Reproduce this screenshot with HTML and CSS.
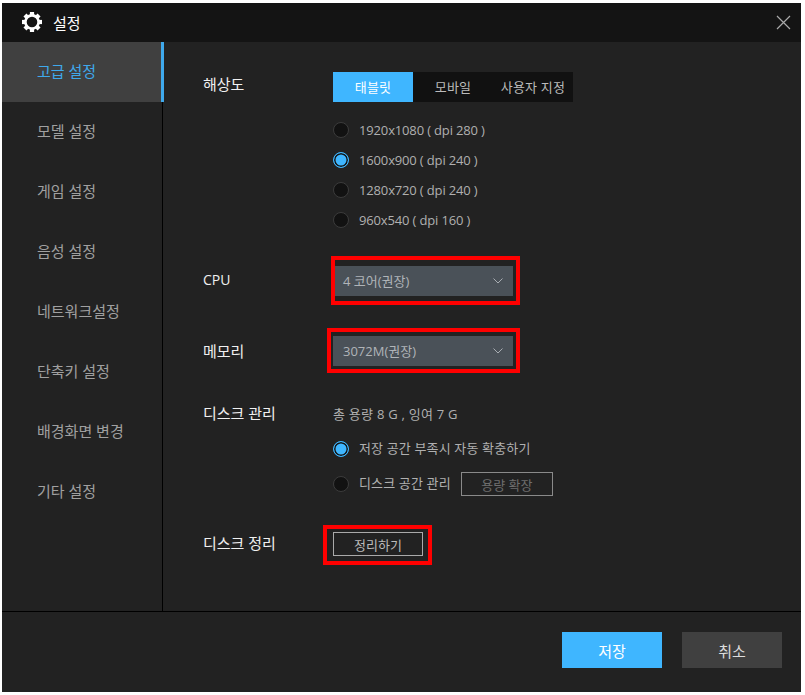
FILE: index.html
```html
<!DOCTYPE html>
<html lang="ko">
<head>
<meta charset="utf-8">
<title>설정</title>
<link rel="stylesheet" href="styles.css">
</head>
<body>
<div class="window">
  <header class="titlebar">
    <svg class="gear" viewBox="0 0 20 20" width="20" height="20">
      <g fill="#fff">
        <rect x="7.9" y="0" width="4.2" height="20"/>
        <rect x="7.9" y="0" width="4.2" height="20" transform="rotate(45 10 10)"/>
        <rect x="7.9" y="0" width="4.2" height="20" transform="rotate(90 10 10)"/>
        <rect x="7.9" y="0" width="4.2" height="20" transform="rotate(135 10 10)"/>
      </g>
      <circle cx="10" cy="10" r="6.6" fill="#141414" stroke="#fff" stroke-width="2.6"/>
    </svg>
    <span class="title">설정</span>
    <svg class="close" viewBox="0 0 15 15" width="15" height="15">
      <path d="M1 1 L14 14 M14 1 L1 14" stroke="#aaa" stroke-width="1.2" fill="none"/>
    </svg>
  </header>

  <div class="main">
    <nav class="sidebar">
      <div class="nav-item active">고급 설정</div>
      <div class="nav-item">모델 설정</div>
      <div class="nav-item">게임 설정</div>
      <div class="nav-item">음성 설정</div>
      <div class="nav-item">네트워크설정</div>
      <div class="nav-item">단축키 설정</div>
      <div class="nav-item">배경화면 변경</div>
      <div class="nav-item">기타 설정</div>
    </nav>

    <section class="content">
      <div class="row">
        <div class="label label-res">해상도</div>
        <div>
          <div class="tabs">
            <div class="tab selected">태블릿</div>
            <div class="tab">모바일</div>
            <div class="tab">사용자 지정</div>
          </div>
          <div class="radios">
            <div class="radio-row latin"><span class="radio"></span>1920x1080 ( dpi 280 )</div>
            <div class="radio-row latin"><span class="radio on"></span>1600x900 ( dpi 240 )</div>
            <div class="radio-row latin"><span class="radio"></span>1280x720 ( dpi 240 )</div>
            <div class="radio-row latin"><span class="radio"></span>960x540 ( dpi 160 )</div>
          </div>
        </div>
      </div>

      <div class="row row-cpu">
        <div class="label label-cpu">CPU</div>
        <div class="select">
          <span class="select-text">4 코어(권장)</span>
          <svg class="chev" viewBox="0 0 10 6" width="10" height="6"><path d="M0.5 0.5 L5 5 L9.5 0.5" stroke="#a8adb2" fill="none"/></svg>
          <div class="mark mark-cpu"></div>
        </div>
      </div>

      <div class="row row-mem">
        <div class="label label-mem">메모리</div>
        <div class="select">
          <span class="select-text">3072M(권장)</span>
          <svg class="chev" viewBox="0 0 10 6" width="10" height="6"><path d="M0.5 0.5 L5 5 L9.5 0.5" stroke="#a8adb2" fill="none"/></svg>
          <div class="mark mark-mem"></div>
        </div>
      </div>

      <div class="row row-disk">
        <div class="label label-disk">디스크 관리</div>
        <div>
          <div class="disk-info">총 용량 8 G , 잉여 7 G</div>
          <div class="radio-row hangul disk-first"><span class="radio on"></span><span class="row-text">저장 공간 부족시 자동 확충하기</span></div>
          <div class="radio-row hangul disk-second"><span class="radio"></span><span class="row-text">디스크 공간 관리</span><button class="btn-expand">용량 확장</button></div>
        </div>
      </div>

      <div class="row row-clean">
        <div class="label label-clean">디스크 정리</div>
        <button class="btn-clean">정리하기<span class="mark mark-clean"></span></button>
      </div>
    </section>
  </div>

  <footer class="footer">
    <button class="btn-save">저장</button>
    <button class="btn-cancel">취소</button>
  </footer>
</div>
</body>
</html>
```
FILE: styles.css
```css
* { box-sizing: border-box; }
html, body { height: 100%; }
body {
  margin: 0;
  padding: 3px 4px 3px 2px;
  background: #fff;
  font-family: "Open Sans", "Noto Sans CJK KR", sans-serif;
  font-size: 13px;
  color: #aaa;
  overflow: hidden;
}
.window {
  height: 689px;
  display: flex;
  flex-direction: column;
  background: #222;
}
.titlebar {
  height: 39px;
  flex: none;
  background: #141414;
  display: flex;
  align-items: center;
  padding: 0 10px 0 20px;
}
.gear { flex: none; margin-top: -1px; }
.title { margin-left: 11px; font-size: 15px; color: #fff; margin-top: -1px; }
.close { margin-left: auto; }

.main { flex: 1; display: flex; min-height: 0; }
.sidebar {
  width: 161px;
  flex: none;
  border-right: 1px solid #000;
}
.nav-item {
  height: 60px;
  padding: 0 0 4px 35px;
  display: flex;
  align-items: center;
  font-size: 15px;
  color: #a0a0a0;
}
.nav-item.active {
  margin-right: -2px;
  position: relative;
  background: #404040;
  border-right: 3px solid #3fa9ec;
  color: #3fa9ec;
}

.content { flex: 1; padding: 30px 0 0 40px; }
.row { display: grid; grid-template-columns: 130px 1fr; justify-items: start; }
.label { font-size: 15px; color: #f0f0f0; line-height: 26px; }
.label-res { line-height: 24px; }
.label-cpu { font-size: 14px; line-height: 28px; }
.label-mem { line-height: 30px; }
.tabs { display: flex; width: 240px; height: 30px; background: #111; }
.tab { display: flex; align-items: center; justify-content: center; width: 80px; white-space: nowrap; color: #bbb; font-size: 13px; letter-spacing: 0.2px; padding-bottom: 1px; }
.tab.selected { background: #3fb6ff; color: #fff; }
.radios { margin-top: 13px; }
.radio-row { height: 30px; display: flex; align-items: center; font-size: 13px; color: #b0b0b0; white-space: nowrap; }
.latin { letter-spacing: -0.15px; }
.hangul { letter-spacing: 0.15px; }
.row-text { margin-top: -4px; }
.radio {
  flex: none;
  width: 16px;
  height: 16px;
  margin-right: 10px;
  border-radius: 50%;
  background: #121212;
  border: 1px solid #3c3c3c;
}
.radio.on {
  background: #3fb6ff;
  border: 1px solid #3fb6ff;
  box-shadow: inset 0 0 0 1.5px #121212;
}

.row-cpu { margin-top: 31px; }
.row-mem { margin-top: 40px; }
.row-disk { margin-top: 38px; }
.row-clean { margin-top: 33px; }

.select {
  position: relative;
  width: 180px;
  height: 30px;
  padding: 0 10px;
  background: #4a5158;
  display: flex;
  align-items: center;
  justify-content: space-between;
  font-size: 13px;
  color: #b0b4b8;
}
.select-text { margin-top: -2px; }
.chev { flex: none; margin-top: -1px; }
.mark { position: absolute; border: 4px solid #f00; pointer-events: none; }
.mark-cpu { left: -2px; top: -10px; width: 189px; height: 49px; }
.mark-mem { left: -6px; top: -8px; width: 193px; height: 45px; }
.mark-clean { left: -11px; top: -8px; width: 109px; height: 40px; }

.label-disk { line-height: 18px; }
.disk-info { height: 20px; line-height: 20px; font-size: 13px; color: #b0b0b0; letter-spacing: 0.25px; }
.disk-first { margin-top: 10px; }
.disk-second { margin-top: 5px; }
.btn-expand {
  width: 92px;
  height: 24px;
  margin-left: 10px;
  padding: 0;
  background: transparent;
  border: 1px solid #8a8a8a;
  font: inherit;
  color: #6e6e6e;
}
.label-clean { line-height: 22px; }
.btn-clean {
  position: relative;
  width: 90px;
  height: 24px;
  padding: 0;
  background: transparent;
  border: 1px solid #aaa;
  font: inherit;
  color: #bbb;
}

.footer {
  height: 81px;
  flex: none;
  border-top: 1px solid #000;
  padding: 20px 19px 0 0;
  display: flex;
  justify-content: flex-end;
  align-items: flex-start;
  gap: 20px;
}
.footer button {
  width: 100px;
  height: 36px;
  padding: 0;
  border: 0;
  font: inherit;
  font-size: 15px;
}
.btn-save { background: #3fb6ff; color: #fff; }
.btn-cancel { background: #404040; color: #ddd; }
```
